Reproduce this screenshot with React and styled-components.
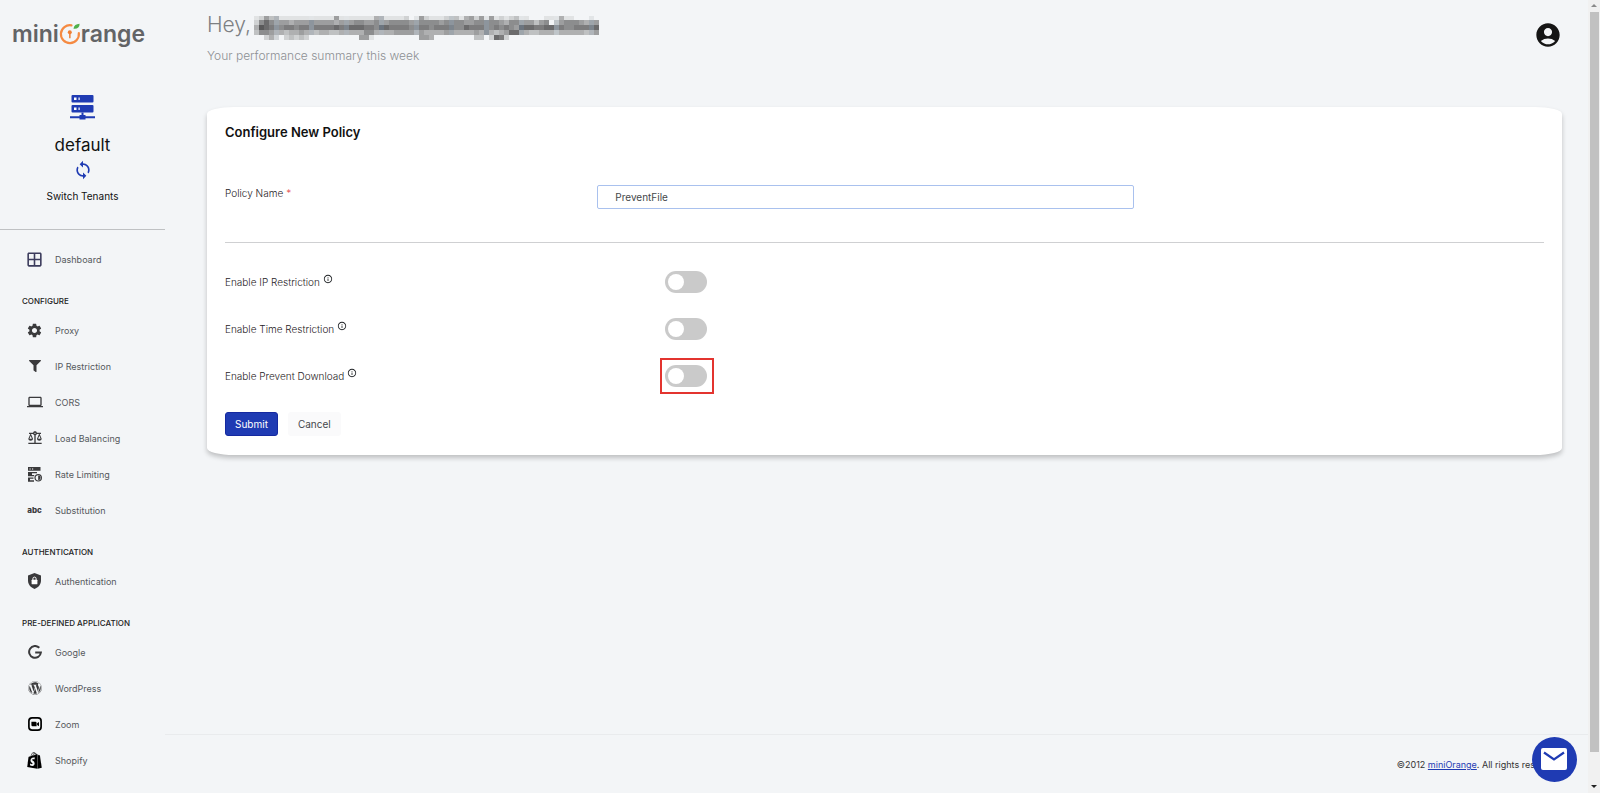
import React, { useState } from "react";
import styled, { createGlobalStyle } from "styled-components";
import {
  MdAccountCircle,
  MdBalance,
  MdInfoOutline,
  MdLaptop,
  MdOutlineWindow,
  MdSettings,
  MdSync,
} from "react-icons/md";
import { FaFilter, FaShopify, FaWordpress } from "react-icons/fa";

const GlobalStyle = createGlobalStyle`
  * {
    box-sizing: border-box;
  }

  body {
    margin: 0;
    background: #f3f5f7;
    color: #111;
    font-family: Inter, "Liberation Sans", sans-serif;
  }

  h1, h2, h3, p, ul {
    margin: 0;
    padding: 0;
    font-weight: 400;
  }

  ul {
    list-style: none;
  }

  input, button {
    font-family: inherit;
  }
`;

const Page = styled.div`
  display: flex;
  min-height: 100vh;
`;

/* sidebar */

const Sidebar = styled.aside`
  flex: 0 0 165px;
`;

const Brand = styled.a`
  display: flex;
  align-items: center;
  height: 36px;
  margin: 16px 0 0 12px;
  color: #636466;
  font-size: 23px;
  font-weight: 600;
  line-height: 36px;
  text-decoration: none;

  svg {
    width: 22px;
    height: 24px;
  }
`;

const Tenant = styled.div`
  display: flex;
  flex-direction: column;
  align-items: center;
  height: 178px;
  padding-top: 43px;
  border-bottom: 1px solid #bfc1c3;

  h3 {
    margin-top: 13px;
    font-size: 17px;
    line-height: 24px;
  }
`;

const SwitchButton = styled.button`
  display: flex;
  flex-direction: column;
  align-items: center;
  gap: 8px;
  margin-top: 3px;
  padding: 0;
  border: 0;
  background: none;
  color: #111;
  font-size: 10px;
  line-height: 16px;

  svg {
    color: #1f3bb3;
  }
`;

const Nav = styled.nav`
  padding-top: 12px;
`;

const GroupTitle = styled.h2`
  height: 35px;
  padding: 15px 0 0 22px;
  color: #222;
  font-size: 8px;
  font-weight: 500;
  line-height: 16px;
`;

const NavLink = styled.a`
  display: flex;
  align-items: center;
  gap: 10px;
  height: 36px;
  padding: 0 0 2px 24px;
  color: #55585c;
  font-size: 9px;
  text-decoration: none;
`;

const NavIcon = styled.span`
  display: flex;
  align-items: center;
  justify-content: center;
  width: 21px;
  height: 21px;
  color: ${(props) => props.$color || "#3a3a3c"};
`;

const AbcMark = styled.b`
  font-size: 8px;
  font-weight: 800;
`;

/* main column */

const Main = styled.main`
  display: flex;
  flex: 1;
  flex-direction: column;
  min-width: 0;
`;

const TopBar = styled.header`
  display: flex;
  align-items: flex-start;
  justify-content: space-between;
  height: 107px;
  padding: 10px 26px 0 42px;
`;

const Greeting = styled.h1`
  display: flex;
  align-items: flex-end;
  gap: 3px;
  color: #7d8083;
  font-size: 21px;
  font-weight: 300;
  line-height: 30px;
`;

const Summary = styled.p`
  margin-top: 8px;
  color: #8d9094;
  font-size: 12px;
  font-weight: 300;
  line-height: 16px;
`;

const AccountButton = styled.button`
  display: flex;
  margin-top: 11px;
  padding: 0;
  border: 0;
  background: none;
  color: #151515;
`;

const Card = styled.form`
  margin: 0 26px 0 42px;
  padding: 17px 18px 19px;
  border-radius: 2%;
  background: #fff;
  box-shadow: 0 3px 5px rgba(0, 0, 0, 0.22);
`;

const CardTitle = styled.h2`
  color: #111;
  font-size: 13px;
  font-weight: 600;
  line-height: 16px;
`;

const NameRow = styled.div`
  display: grid;
  grid-template-columns: 372fr 536fr 410fr;
  margin-top: 45px;
  padding-bottom: 33px;
  border-bottom: 1px solid #cfd0d2;
`;

const Label = styled.label`
  display: flex;
  gap: 3px;
  color: #1f2225;
  font-size: 10px;
  font-weight: 300;
  line-height: 16px;
`;

const Star = styled.span`
  color: #e5484d;
`;

const TextInput = styled.input`
  height: 24px;
  padding: 0 17px;
  border: 1px solid #a9c1ee;
  border-radius: 2px;
  background: #fff;
  color: #44474a;
  font-size: 10px;
  outline: none;
`;

const ToggleList = styled.div`
  display: grid;
  gap: 25px;
  padding-top: 28px;
`;

const ToggleRow = styled.div`
  display: grid;
  grid-template-columns: 1fr 2fr;
  align-items: center;
`;

const ToggleBox = styled.span`
  position: relative;
  display: flex;
  width: 42px;

  /* red frame round the switch */
  &::after {
    content: "";
    display: ${(props) => (props.$marked ? "block" : "none")};
    position: absolute;
    inset: -7px -7px -7px -5px;
    border: 2px solid #e3342f;
    pointer-events: none;
  }
`;

const Toggle = styled.input`
  appearance: none;
  width: 42px;
  height: 22px;
  margin: 0;
  padding: 3px;
  border-radius: 11px;
  background: ${(props) => (props.checked ? "#1f3bb3" : "#cacaca")};

  &::before {
    content: "";
    display: block;
    width: 16px;
    height: 16px;
    margin-left: ${(props) => (props.checked ? "20px" : "0")};
    border-radius: 50%;
    background: #fff;
  }
`;

const Actions = styled.div`
  display: flex;
  gap: 10px;
  margin-top: 25px;
`;

const Button = styled.button`
  height: 24px;
  padding: 0 9px;
  border: 1px solid ${(props) => (props.$primary ? "#1529a0" : "#fafafb")};
  border-radius: 3px;
  background: ${(props) => (props.$primary ? "#1f3bb3" : "#fafafb")};
  color: ${(props) => (props.$primary ? "#fff" : "#44474a")};
  font-size: 10px;
  line-height: 16px;
`;

const Footer = styled.footer`
  margin-top: auto;
  padding: 22px 26px 20px;
  border-top: 1px solid #e9ebed;
  color: #333;
  font-size: 9px;
  line-height: 16px;
  text-align: right;

  a {
    color: #1f3bb3;
  }
`;

const MailButton = styled.button`
  position: fixed;
  right: 23px;
  bottom: 11px;
  display: flex;
  align-items: center;
  justify-content: center;
  width: 45px;
  height: 45px;
  padding: 0 2px 2px 0;
  border: 0;
  border-radius: 50%;
  background: #1f3bb3;
`;

/* scroll bar */

const ScrollTrack = styled.div`
  position: sticky;
  top: 0;
  display: flex;
  flex: 0 0 12px;
  flex-direction: column;
  align-items: center;
  height: 100vh;
  background: #f1f1f1;
`;

const ScrollThumb = styled.div`
  flex: 1;
  width: 9px;
  margin-bottom: 29px;
  background: #c1c1c1;
`;

const Arrow = styled.svg`
  flex: none;
  width: 6px;
  height: 12px;
`;

const BrandMark = () => (
  <svg viewBox="0 0 22 24" fill="none">
    <path d="M12.500 3.300A9 9 0 1 0 19.800 11" stroke="#f58a42" strokeWidth="2.200" strokeLinecap="round" />
    <circle cx="10.800" cy="10.200" r="2" fill="#ef7f35" />
    <path d="M10.100 11h1.500v5.200h-1.500z" fill="#ef7f35" />
    <path d="M14.500 6.800C15 3.500 17 2 20.600 1.800c0 3.500-2.200 5.400-6.100 5z" fill="#4fb04b" />
  </svg>
);

const ServerIcon = () => (
  <svg width="25" height="25" viewBox="0 0 25 25" fill="#1f3bb3">
    <rect x="1.500" y="0" width="22" height="7.500" rx="1" />
    <rect x="1.500" y="10" width="22" height="7.500" rx="1" />
    <path d="M11.500 17.500h2V20h2v1.300H25v2h-9.500v1.200h-6v-1.200H0v-2h9.500V20h2z" />
    <path d="M4 2.500h2.500V5H4zM8.500 2.500h1.200V5H8.500zM4 12.500h2.500V15H4zM8.500 12.500h1.200V15H8.500z" fill="#fff" />
  </svg>
);

const RateIcon = () => (
  <svg width="14" height="15" viewBox="0 0 14 15" fill="currentColor">
    <path d="M0 0h12.500v3.800H0zM0 5h9v1.200H4V8h2.200v1.200H0zM0 10.500h5.500v1.200H2v1.600h4v1.400H0z" />
    <path d="M1.500 1.400h1.200v1.100H1.500zM4 1.400h1.200v1.100H4z" fill="#fff" />
    <circle cx="10.200" cy="10.800" r="3.200" fill="#f3f5f7" stroke="currentColor" strokeWidth="1.200" />
    <path d="M10.200 8.400a2.400 2.400 0 0 1 0 4.800z" />
  </svg>
);

const ShieldIcon = () => (
  <svg width="13" height="16" viewBox="0 0 13 16">
    <path d="M6.500 0L13 2.500v5c0 4-2.700 7-6.500 8.500C2.700 14.500 0 11.500 0 7.500v-5z" fill="currentColor" />
    <path d="M4.900 7V5.700a1.600 1.600 0 0 1 3.200 0V7" fill="none" stroke="#fff" />
    <rect x="3.600" y="6.800" width="5.800" height="4.500" rx=".5" fill="#fff" />
  </svg>
);

const GoogleIcon = () => (
  <svg width="14" height="14" viewBox="0 0 14 14" fill="none" stroke="currentColor" strokeWidth="2">
    <path d="M11.300 2.800A5.900 5.900 0 1 0 12.900 7.500H7.200" />
  </svg>
);

const ZoomIcon = () => (
  <svg width="14" height="14" viewBox="0 0 14 14" fill="currentColor">
    <rect x=".9" y=".9" width="12.200" height="12.200" rx="3.200" fill="none" stroke="currentColor" strokeWidth="1.700" />
    <path d="M3.400 4.800h4a1.200 1.200 0 0 1 1.200 1.200v3.300h-4a1.200 1.200 0 0 1-1.200-1.200zM9.100 6.200l1.900-1.300v4.300L9.100 7.900z" />
  </svg>
);

const MailIcon = () => (
  <svg width="26" height="22" viewBox="0 0 26 22">
    <rect width="26" height="22" rx="2" fill="#fff" />
    <path d="M3 4.500l10 7 10-7" fill="none" stroke="#1f3bb3" strokeWidth="2.200" />
  </svg>
);

// Masked account address: one digit per 5px block, 9 is the darkest
const MASK = [
  "125341111111111151111111441111201521112331452515121231100011141100010",
  "268655545556555545556655655666655666656666556666654665553560356665455",
  "498766776776777787788877688777766776777766877766767658887788676677778",
  "366544344544344334444466444455554544445544445464345885433444344444345",
  "002420232320000000000551000000000554000000003302872000000000000000000",
];

const MaskedName = () => (
  <svg width="345" height="24" viewBox="0 0 345 24" role="img" aria-label="Hidden account" shapeRendering="crispEdges">
    {MASK.map((line, y) =>
      line.split("").map((level, x) => (
        <rect
          key={`${x}-${y}`}
          x={x * 5}
          y={y ? y * 5 - 1 : 0}
          width="5"
          height={y ? 5 : 4}
          fill={x % 7 === 4 ? "#4a5560" : "#484848"}
          opacity={level * 0.1}
        />
      ))
    )}
  </svg>
);

const groups = [
  { links: [{ name: "Dashboard", icon: <MdOutlineWindow size={19} />, color: "#3b3b5c" }] },
  {
    title: "CONFIGURE",
    links: [
      { name: "Proxy", icon: <MdSettings size={17} /> },
      { name: "IP Restriction", icon: <FaFilter size={12} /> },
      { name: "CORS", icon: <MdLaptop size={16} /> },
      { name: "Load Balancing", icon: <MdBalance size={16} /> },
      { name: "Rate Limiting", icon: <RateIcon /> },
      { name: "Substitution", icon: <AbcMark>abc</AbcMark> },
    ],
  },
  {
    title: "AUTHENTICATION",
    links: [{ name: "Authentication", icon: <ShieldIcon /> }],
  },
  {
    title: "PRE-DEFINED APPLICATION",
    links: [
      { name: "Google", icon: <GoogleIcon /> },
      { name: "WordPress", icon: <FaWordpress size={14} /> },
      { name: "Zoom", icon: <ZoomIcon />, color: "#000" },
      { name: "Shopify", icon: <FaShopify size={17} />, color: "#000" },
    ],
  },
];

const options = [
  { id: "ip", name: "Enable IP Restriction" },
  { id: "time", name: "Enable Time Restriction" },
  { id: "download", name: "Enable Prevent Download", marked: true },
];

const SideMenu = () => (
  <Sidebar>
    <Brand href="#" aria-label="miniOrange">
      <span>mini</span>
      <BrandMark />
      <span>range</span>
    </Brand>
    <Tenant>
      <ServerIcon />
      <h3>default</h3>
      <SwitchButton type="button">
        <MdSync size={20} />
        Switch Tenants
      </SwitchButton>
    </Tenant>
    <Nav>
      {groups.map((group, i) => (
        <React.Fragment key={i}>
          {group.title && <GroupTitle>{group.title}</GroupTitle>}
          <ul>
            {group.links.map(({ name, icon, color }) => (
              <li key={name}>
                <NavLink href="#">
                  <NavIcon $color={color}>{icon}</NavIcon>
                  {name}
                </NavLink>
              </li>
            ))}
          </ul>
        </React.Fragment>
      ))}
    </Nav>
  </Sidebar>
);

const PolicyForm = () => {
  const [policyName, setPolicyName] = useState("PreventFile");
  const [enabled, setEnabled] = useState({});

  return (
    <Card onSubmit={(e) => e.preventDefault()}>
      <CardTitle>Configure New Policy</CardTitle>
      <NameRow>
        <Label htmlFor="policyName">
          Policy Name <Star>*</Star>
        </Label>
        <TextInput
          id="policyName"
          value={policyName}
          onChange={(e) => setPolicyName(e.target.value)}
        />
      </NameRow>
      <ToggleList>
        {options.map(({ id, name, marked }) => (
          <ToggleRow key={id}>
            <Label htmlFor={id}>
              {name} <MdInfoOutline size={10} />
            </Label>
            <ToggleBox $marked={marked}>
              <Toggle
                id={id}
                type="checkbox"
                checked={!!enabled[id]}
                onChange={(e) => setEnabled({ ...enabled, [id]: e.target.checked })}
              />
            </ToggleBox>
          </ToggleRow>
        ))}
      </ToggleList>
      <Actions>
        <Button type="submit" $primary>Submit</Button>
        <Button type="button">Cancel</Button>
      </Actions>
    </Card>
  );
};

const App = () => (
  <Page>
    <GlobalStyle />
    <SideMenu />
    <Main>
      <TopBar>
        <div>
          <Greeting>
            Hey, <MaskedName />
          </Greeting>
          <Summary>Your performance summary this week</Summary>
        </div>
        <AccountButton type="button" aria-label="Account">
          <MdAccountCircle size={28} />
        </AccountButton>
      </TopBar>
      <PolicyForm />
      <Footer>
        ©2012 <a href="#">miniOrange</a>. All rights reserved.
      </Footer>
    </Main>
    <MailButton type="button" aria-label="Send mail">
      <MailIcon />
    </MailButton>
    <ScrollTrack aria-hidden="true">
      <Arrow viewBox="0 0 6 12">
        <path d="M0 7l3-3 3 3z" fill="#8a8a8a" />
      </Arrow>
      <ScrollThumb />
      <Arrow viewBox="0 0 6 12">
        <path d="M0 4l3 3 3-3z" fill="#222" />
      </Arrow>
    </ScrollTrack>
  </Page>
);

export default App;
